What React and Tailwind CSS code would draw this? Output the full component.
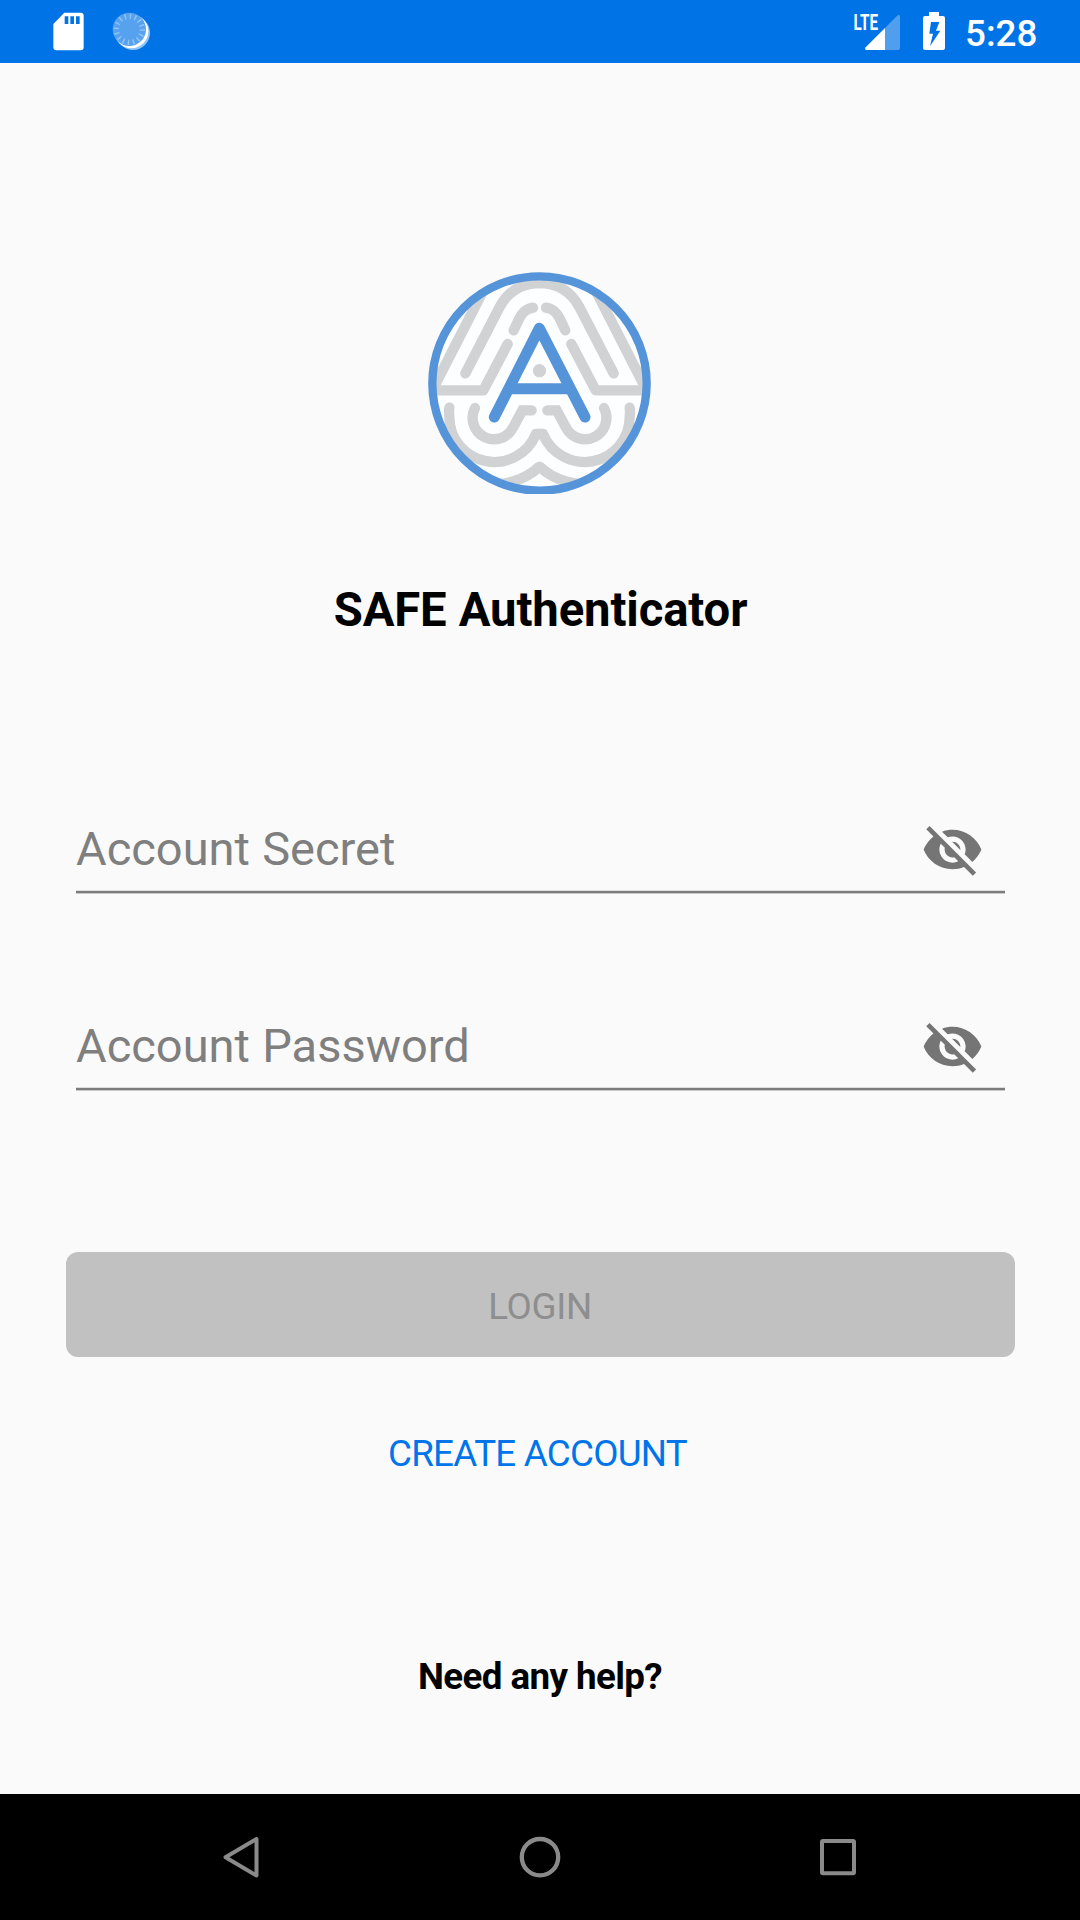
import { MdVisibilityOff } from "react-icons/md";

function StatusBar() {
  return (
    <header className="flex h-[63px] shrink-0 items-start bg-[#0074e7] text-white">
      <svg className="ml-[30px] h-[63px] w-[150px]" viewBox="0 0 450 189">
        <path
          fill="#fff"
          fillRule="evenodd"
          d="M103 38H152Q161 38 161 47V142Q161 151 152 151H79Q70 151 70 142V72ZM104 49V72H115V49ZM121 49V72H132V49ZM138 49V72H149V49Z"
        />
        <circle cx="309" cy="99" r="51" fill="#8fc3f6" />
        <circle cx="304" cy="94" r="51" fill="#fff" />
        <circle cx="298" cy="88" r="50" fill="#56a2ee" />
        <circle cx="298" cy="88" r="39" fill="none" stroke="#8fc2f4" strokeWidth="16" strokeDasharray="4.5 10.8" />
      </svg>
      <svg className="ml-auto h-[63px] w-[120px]" viewBox="0 0 360 189">
        <text
          x="0"
          y="0"
          fill="#fff"
          fontWeight="700"
          fontSize="68"
          className="font-['Roboto']"
          transform="translate(40.5 89) scale(.67 1)"
        >
          LTE
        </text>
        <path fill="#4f9fee" d="M135 84L173 46Q180 42 180 50V144Q180 150 174 150H135Z" />
        <path fill="#fff" d="M135 84V150H80Q72 149 77 142Z" />
        <path
          fill="#fff"
          fillRule="evenodd"
          d="M267 36H297V48H309Q315 48 315 54V144Q315 150 309 150H255Q249 150 249 144V54Q249 48 255 48H267ZM273 66L268 101H279L270 139L301 92H288L298 66Z"
        />
      </svg>
      <span className="mr-[43px] w-[77px] pl-[5px] text-[36.75px] leading-[67px] font-medium whitespace-nowrap">5:28</span>
    </header>
  );
}

function LowerSwirls() {
  return (
    <>
      <path strokeLinecap="round" d="M165 429A64 64 0 0 0 279 488L307 436H335" />
      <path strokeLinecap="round" strokeLinejoin="round" d="M88 428C86 438 87 448 88 457A135 135 0 0 0 348 507H362" />
      <path strokeLinejoin="round" d="M40 537A200 200 0 0 0 358.5 605" />
    </>
  );
}

function UpperSwirls() {
  return (
    <>
      <path d="M220 18L40 370" />
      <path strokeLinecap="round" strokeLinejoin="round" d="M30 376H190L263 237" />
      <path strokeLinecap="round" d="M136 325L238 128C265 76 310 54 360 54" />
      <path strokeLinecap="round" d="M339 128C315 132 306 145 297 162L281 196" />
    </>
  );
}

function Logo() {
  return (
    <svg className="h-[229px] w-[240px]" viewBox="0 0 720 687">
      <defs>
        <clipPath id="disc">
          <circle cx="358.5" cy="355" r="322" />
        </clipPath>
      </defs>
      <circle cx="358.5" cy="355" r="322" fill="#fdfeff" />
      <g clipPath="url(#disc)" fill="none" stroke="#d0d2d4" strokeWidth="31">
        <UpperSwirls />
        <LowerSwirls />
        <g transform="translate(717 0) scale(-1 1)">
          <UpperSwirls />
          <LowerSwirls />
        </g>
        <circle cx="358.5" cy="605" r="15.5" fill="#d0d2d4" stroke="none" />
      </g>
      <circle cx="358.5" cy="317" r="20" fill="#d0d2d4" />
      <g fill="none" stroke="#5594d8" strokeWidth="33" strokeLinecap="round" strokeLinejoin="round">
        <path d="M223 456L358 190L495 456" />
        <path d="M272 371H446" strokeLinecap="butt" />
      </g>
      <circle cx="358.5" cy="355.5" r="321.5" fill="none" stroke="#5594d8" strokeWidth="25" />
    </svg>
  );
}

function SecretField({ label }) {
  return (
    <div className="mx-[76px] w-[929px]">
      <div className="flex h-[85px] items-start justify-between">
        <span className="pl-[0.5px] text-[47px] leading-[88px] [word-spacing:0.6px] whitespace-nowrap text-[#7f7f7f]">
          {label}
        </span>
        <MdVisibilityOff className="mt-[13px] mr-[21px] size-[63px] text-[#757575]" />
      </div>
      <div className="h-[4px] border-y border-t-[#dcdcdc] border-b-[#c8c8c8] bg-[#7c7c7c]" />
    </div>
  );
}

function NavBar() {
  return (
    <nav className="mt-auto flex h-[126px] shrink-0 items-start justify-between bg-black px-[219px] pt-[41px]">
      <svg className="h-[44px] w-[44px]" viewBox="0 0 44 44" fill="none" stroke="#8a8a8a" strokeWidth="4" strokeLinejoin="round">
        <path d="M37.5 4V40.5L6.5 22.2Z" />
      </svg>
      <svg className="h-[44px] w-[44px]" viewBox="0 0 44 44" fill="none" stroke="#8a8a8a" strokeWidth="4.3">
        <circle cx="22" cy="22.2" r="18.2" />
      </svg>
      <svg className="h-[44px] w-[44px]" viewBox="0 0 44 44" fill="none" stroke="#8a8a8a" strokeWidth="4">
        <rect x="5" y="6" width="32" height="32.2" rx="1" />
      </svg>
    </nav>
  );
}

export default function App() {
  return (
    <div className="flex h-[1920px] w-[1080px] flex-col overflow-hidden bg-[#fafafa] font-['Roboto',sans-serif]">
      <StatusBar />
      <main className="flex flex-col items-center">
        <div className="mt-[202px]">
          <Logo />
        </div>
        <h1 className="mt-[86px] pl-[1px] text-[47.25px] leading-[61px] font-bold tracking-[-0.12px] [word-spacing:0.6px] whitespace-nowrap text-black">
          SAFE Authenticator
        </h1>
        <div className="mt-[164px]">
          <SecretField label="Account Secret" />
        </div>
        <div className="mt-[108px]">
          <SecretField label="Account Password" />
        </div>
        <button className="mt-[161px] flex h-[105px] w-[949px] justify-center rounded-[12px] bg-[#c1c1c1] text-[36.75px] leading-[109px] tracking-[-0.3px] text-[#8e8e8e]">
          LOGIN
        </button>
        <a className="mt-[67px] mr-[5px] text-[36.75px] leading-[60px] tracking-[-0.75px] whitespace-nowrap text-[#0075ea]">
          CREATE ACCOUNT
        </a>
        <a className="mt-[163px] text-[36.75px] leading-[60px] font-bold tracking-[-0.6px] whitespace-nowrap text-black">
          Need any help?
        </a>
      </main>
      <NavBar />
    </div>
  );
}
